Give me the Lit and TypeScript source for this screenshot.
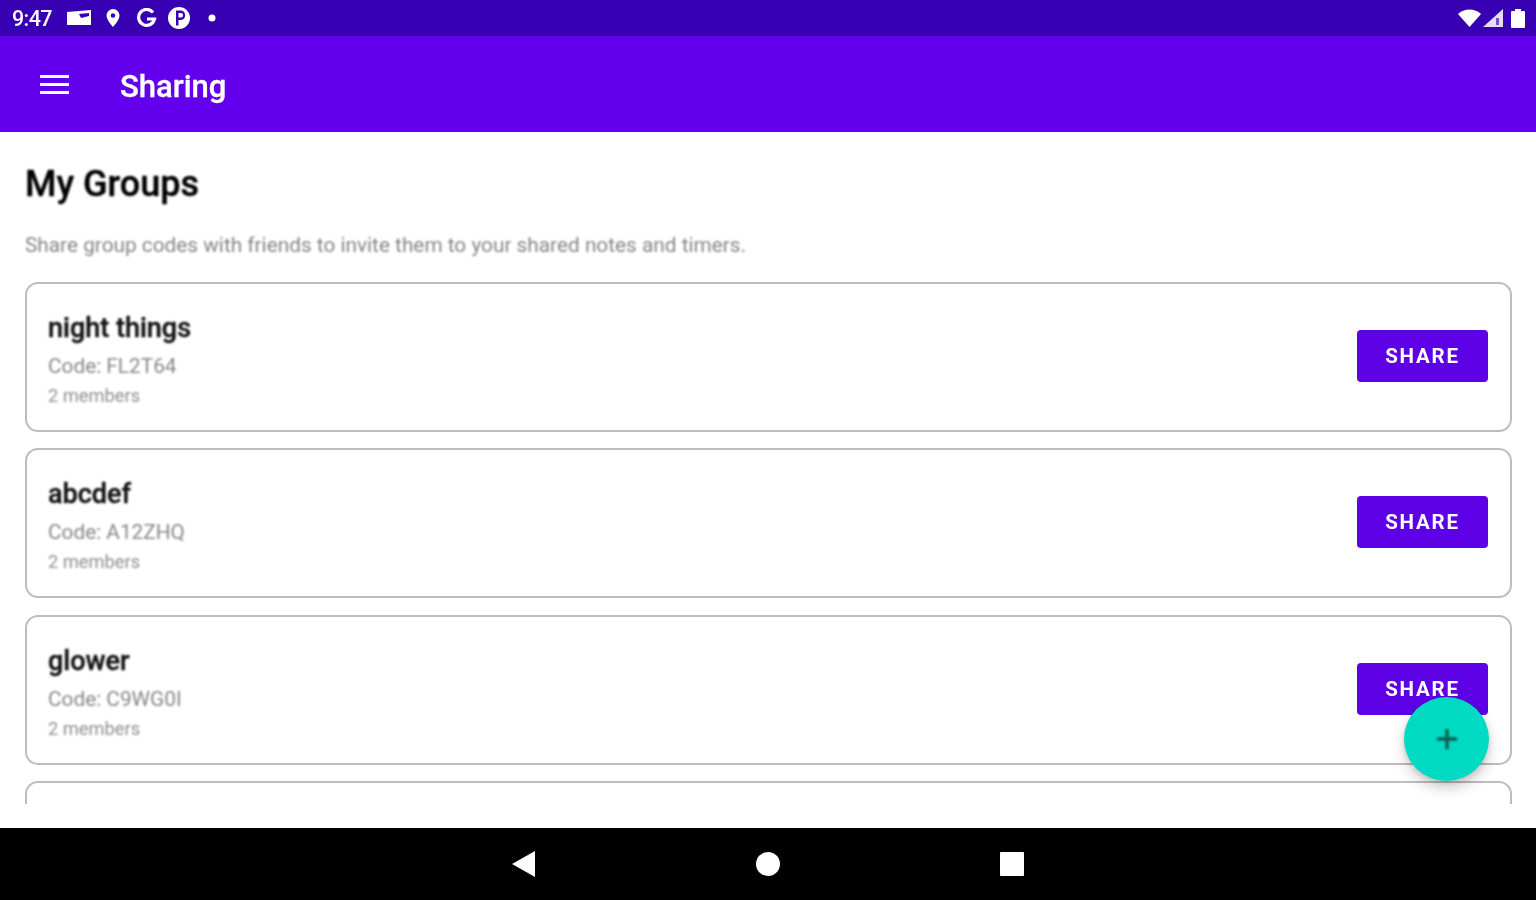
import { LitElement, html, css } from "lit";
import { customElement } from "lit/decorators.js";

const groups = [
  { name: "night things", code: "FL2T64", members: "2 members" },
  { name: "abcdef", code: "A12ZHQ", members: "2 members" },
  { name: "glower", code: "C9WG0I", members: "2 members" },
  { name: "", code: "", members: "" },
];

@customElement("app-root")
export class AppRoot extends LitElement {
  static styles = css`
    :host { display: flex; flex-direction: column; position: relative; width: 1536px; height: 900px; overflow: hidden; background: #fff; font-family: Roboto, "Liberation Sans", sans-serif; }
    .status { height: 36px; flex: none; background: #3700b3; color: #fff; display: flex; align-items: center; padding: 0 11px 0 12px; }
    .time { font-size: 21.5px; font-weight: 500; width: 55px; letter-spacing: -0.6px; filter: blur(0.6px); }
    .status svg { display: block; flex: none; fill: #fff; filter: blur(0.7px); }
    .mail { margin-right: 15px; }
    .pin { margin-right: 15px; }
    .g { margin-right: 11px; }
    .p { margin-right: 18px; }
    .spacer { flex: 1; }
    .wifi { margin-right: 2px; }
    .signal { margin-right: 8px; }
    .appbar { height: 96px; flex: none; background: #6200ee; color: #fff; display: flex; align-items: center; padding-left: 39px; box-sizing: border-box; }
    .appbar svg { display: block; margin-right: 50px; filter: blur(0.7px); position: relative; top: 1px; }
    .appbar span { font-size: 31px; font-weight: 500; -webkit-text-stroke: 0.3px #fff; filter: blur(0.7px); position: relative; top: 2px; }
    main { flex: 1; min-height: 0; display: flex; flex-direction: column; padding: 0 24px 24px 25px; box-sizing: border-box; }
    h1 { margin: 32px 0 0; font-size: 36px; line-height: 40px; font-weight: 500; color: #000; -webkit-text-stroke: 0.4px #000; filter: blur(0.8px); }
    .hint { margin: 27px 0 0; font-size: 20.8px; line-height: 28px; color: #858585; filter: blur(0.8px); }
    .list { flex: 1; min-height: 0; overflow: hidden; margin-top: 23px; display: flex; flex-direction: column; gap: 16.300px; }
    .card { flex: none; height: 150px; box-sizing: border-box; border: 2px solid #bdbdbd; border-radius: 13px; display: flex; align-items: center; justify-content: space-between; padding: 0 22px 0 21px; background: #fff; }
    .info { padding-top: 6px; }
    .name { font-size: 27px; line-height: 32px; font-weight: 500; color: #111; -webkit-text-stroke: 0.4px #111; filter: blur(0.8px); }
    .code { font-size: 20.8px; line-height: 28px; margin-top: 8px; color: #878787; filter: blur(0.8px); }
    .members { font-size: 18.3px; line-height: 24px; margin-top: 4px; color: #8f8f8f; filter: blur(0.8px); }
    button { width: 131px; height: 52px; margin-bottom: 2px; border: 0; border-radius: 4px; background: #5d00e6; color: #fff; font: 700 20.5px Roboto, "Liberation Sans", sans-serif; letter-spacing: 1.8px; padding: 0; }
    button span { filter: blur(0.6px); display: inline-block; }
    .fab { position: absolute; left: 1404px; top: 697px; width: 85px; height: 84px; border-radius: 50%; background: #00dac2; display: flex; align-items: center; justify-content: center; box-shadow: 0 7px 14px rgba(0,0,0,.2), 0 2px 5px rgba(0,0,0,.1); }
    .fab svg { display: block; filter: blur(0.8px); }
    .nav { height: 72px; flex: none; background: #000; display: flex; align-items: center; justify-content: center; gap: 220px; }
    .nav svg { display: block; fill: #fff; filter: blur(0.6px); }
  `;

  render() {
    return html`
      <div class="status">
        <span class="time">9:47</span>
        <svg class="mail" width="24" height="17" viewBox="0 0 24 17"><path d="M0 2 L24 0 V15 H0 Z M12 4 L22 3 V6 L14 8 Z" fill-rule="evenodd"/></svg>
        <svg class="pin" width="14" height="18" viewBox="0 0 14 18"><path d="M7 0a6.500 6.500 0 0 0-6.500 6.500C.5 11 7 18 7 18s6.500-7 6.500-11.500A6.500 6.500 0 0 0 7 0Zm0 4.200a2.300 2.300 0 1 1 0 4.600 2.300 2.300 0 0 1 0-4.600Z" fill-rule="evenodd"/></svg>
        <svg class="g" width="22" height="20" viewBox="0 0 22 20"><path d="M18 4.500A8 8 0 1 0 19.500 11H12" fill="none" stroke="#fff" stroke-width="3.200"/></svg>
        <svg class="p" width="22" height="22" viewBox="0 0 22 22"><path d="M11 0a11 11 0 1 1 0 22 11 11 0 0 1 0-22ZM8 3.500v15h2.500V13h2.500a4.800 4.800 0 0 0 0-9.500ZM10.500 6h2.300a2 2 0 0 1 0 4.500h-2.300Z" fill-rule="evenodd"/></svg>
        <svg width="8" height="8" viewBox="0 0 8 8"><circle cx="4" cy="4" r="3.500"/></svg>
        <span class="spacer"></span>
        <svg class="wifi" width="23" height="18" viewBox="0 0 23 18"><path d="M0 5C6-1 17-1 23 5L11.500 18Z"/></svg>
        <svg class="signal" width="20" height="18" viewBox="0 0 20 18"><path d="M20 0V18H0Z" fill="#e4dcf8"/><path d="M13 9h3v7h-3Z" fill="#7a4cc8"/></svg>
        <svg width="14" height="19" viewBox="0 0 14 19"><path d="M4 0h6v2h3a1 1 0 0 1 1 1v15a1 1 0 0 1-1 1H1a1 1 0 0 1-1-1V3a1 1 0 0 1 1-1h3Z"/></svg>
      </div>
      <header class="appbar">
        <svg width="31" height="20" viewBox="0 0 31 20"><path d="M1 1.500h29M1 9.500h29M1 17.500h29" stroke="#fff" stroke-width="3"/></svg>
        <span>Sharing</span>
      </header>
      <main>
        <h1>My Groups</h1>
        <p class="hint">Share group codes with friends to invite them to your shared notes and timers.</p>
        <div class="list">
          ${groups.map((g) => html`
            <div class="card">
              ${g.name ? html`
                <div class="info">
                  <div class="name">${g.name}</div>
                  <div class="code">Code: ${g.code}</div>
                  <div class="members">${g.members}</div>
                </div>
                <button><span>SHARE</span></button>` : ""}
            </div>`)}
        </div>
      </main>
      <div class="fab">
        <svg width="22" height="22" viewBox="0 0 22 22"><path d="M11 1v20M1 11h20" stroke="#0a5d55" stroke-width="3.500"/></svg>
      </div>
      <nav class="nav">
        <svg width="24" height="26" viewBox="0 0 24 26"><path d="M23 0V26L0 13Z"/></svg>
        <svg width="24" height="24" viewBox="0 0 24 24"><circle cx="12" cy="12" r="12"/></svg>
        <svg width="24" height="24" viewBox="0 0 24 24"><rect width="24" height="24" rx="1"/></svg>
      </nav>
    `;
  }
}
